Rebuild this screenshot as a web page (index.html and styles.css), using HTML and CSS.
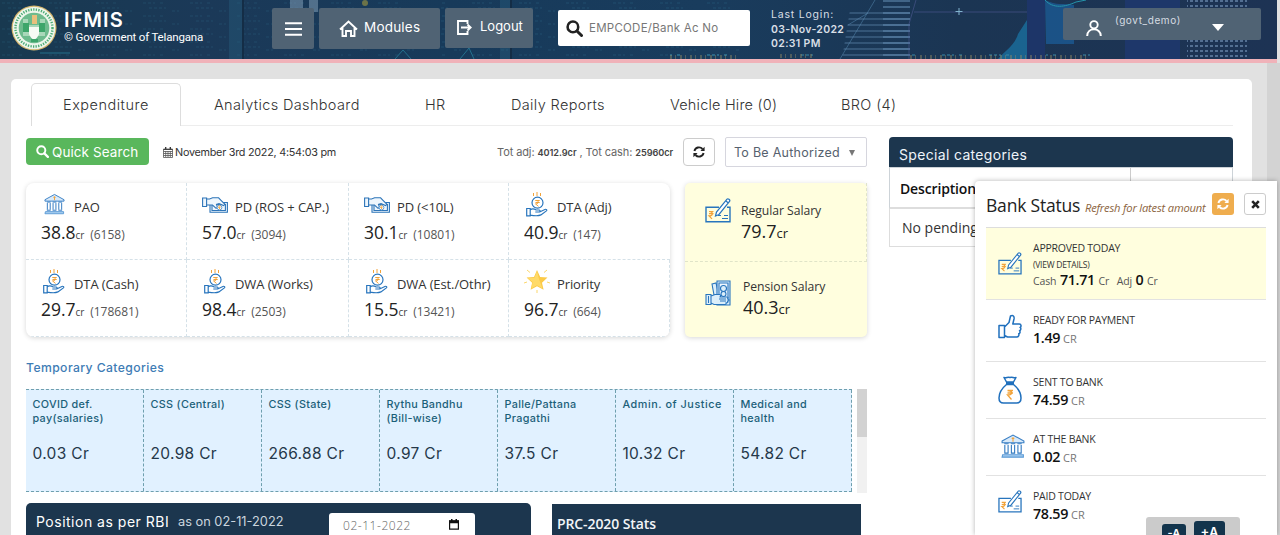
FILE: index.html
```html
<!DOCTYPE html>
<html lang="en">
<head>
<meta charset="utf-8">
<title>IFMIS Telangana</title>
<link rel="stylesheet" href="styles.css">
</head>
<body>
<svg class="defs" aria-hidden="true">
  <defs>
    <pattern id="dots" width="5" height="5" patternUnits="userSpaceOnUse"><rect width="3" height="2" fill="#7898bd"/></pattern>
    <pattern id="bars" width="30" height="6" patternUnits="userSpaceOnUse"><rect width="30" height="2" fill="#5b83a8"/></pattern>
    <pattern id="code" width="47" height="13" patternUnits="userSpaceOnUse"><path d="M2 3h12M19 3h3M8 8h17M31 11h7" stroke="#388aa8" stroke-dasharray="3 2"/></pattern>
  </defs>
  <symbol id="bank" viewBox="0 0 22 22"><path d="M1 6.500 11 1l10 5.500v1.500H1z" fill="#d8eafa" stroke="#3a7fc4"/><path d="M3 9h4M9 9h4M15 9h4M3.500 10v7M6.500 10v7M9.500 10v7M12.500 10v7M15.500 10v7M18.500 10v7M3 17.500h4M9 17.500h4M15 17.500h4" stroke="#2f78c0" fill="none"/><path d="M1.500 19h19v2.200H1z" fill="#a8cef0" stroke="#5c9bd6"/><path d="M11 3v4M9.800 4h2.400" stroke="#f2a33a"/></symbol>
  <symbol id="cash" viewBox="0 0 26 16"><g fill="#eef6fd" stroke="#2d74b8" stroke-width="1.100"><path d="M8 5.500h17.400v9.800H8z"/><path d="M10 7.500h13.400v6H10z" fill="none"/><path d="M.6 1h4v8.500h-4zM4.600 2h3l3-1.200h6l2.400 2.500 4 4-1.500 1.300-4.500-2-2.500.8 1 3-1.400 1-3.600-3.400H4.600z"/></g><circle cx="17.500" cy="10.500" r="2.400" fill="#fff" stroke="#5c9bd6"/><path d="M16.500 9h2m-2 1.300h2m-1.800 0 1.500 2" stroke="#f2a33a" fill="none"/></symbol>
  <symbol id="coin" viewBox="0 0 22 25"><path d="M7.500 1v3M11 0v4M14.500 1v3" stroke="#f2a33a"/><g fill="none" stroke="#2875bd" stroke-width="1.200"><circle cx="11.500" cy="10.700" r="5.500"/><path d="M.7 16.500h3.500v7.300H.7zM4.200 18c2-1.800 3.600-1.400 6 0h3c1.200.3 1.200 2 0 2H9.300h4.400l5.200-2.500c1.400-.7 2.500.5 1.500 1.400l-5.500 4c-2 1-5 1.300-10.700.2"/></g><path d="M9.500 8.500h4.200m-4.200 2h4.200M9.500 8.500c4 0 4 3.400 0 3.400l3 2.500" stroke="#f2a33a" fill="none"/></symbol>
  <symbol id="star" viewBox="0 0 26 26"><path d="m13 2 3.200 7 7.300.6-5.500 5.200 1.600 7-6.600-3.600-6.400 3.600 1.500-7L2.600 9.600 10 9z" fill="#fcca47"/><path d="m13 3 1.800 7.500 3.700 9.900-5.500-3.200-5.800 3.200L8.700 14 3.500 10.200l7-.5z" fill="#ffda68"/><path d="m3 2 3 2.500M23 2l-3 2.500M0 15l3-1M26 15l-3-1M13 22v3" stroke="#fbd76c"/></symbol>
  <symbol id="cheque" viewBox="0 0 26 25"><g fill="none" stroke="#2875bd" stroke-width="1.400"><path d="M14 9.200H1v14.500h24V9.200h-3"/><path d="M17 20.500h6M13 17.500h3M19 17.500h4" stroke-width="1"/><path d="m10.500 18 1-4L22 1.200c1-1 3.400.6 2.700 2L14 16.500zM21 3l2.300 2" fill="#fff" stroke-width="1.200"/></g><path d="M4 13.500h4.500M4 15.700h4.500M4 13.500c4.500 0 4.500 4.400 0 4.400l3 3" stroke="#f2a33a" stroke-width="1.200" fill="none"/></symbol>
  <symbol id="pension" viewBox="0 0 26 26"><g fill="#dbeefa" stroke="#2875bd" stroke-width="1.100"><path d="m7 4 4-1 3 12H9z"/><path d="M12 1h13v24H12z"/><path d="M14 3h9v15h-9z" fill="#f0f8ff"/><circle cx="18.500" cy="8.500" r="3"/><circle cx="18.500" cy="14" r="2.500"/><path d="M1 14.500h5v10H1zM6 16l4-1.500h4.500c1.500 0 1.500 2.500 0 2.500H22c1.400 0 1.400 2 0 2h1c1.300 0 1.300 2 0 2h-1c1.200 0 1.200 1.800 0 1.800h-1.500c1 0 1 1.700-.5 1.700H9l-3-1.500z"/></g><path d="M3.500 16v7M14 19h7m-6 2h6" stroke="#2875bd"/></symbol>
  <symbol id="thumb" viewBox="0 0 24 24"><path d="M1 11h5.500v12H1zM6.500 12.500 11 8l1.500-6.500c2.500-1.500 4 .5 3.500 3l-1.200 5h6.500c2.200 0 2.200 3 .7 3.400 1.400.8 1 3-.5 3.300 1 .9.600 2.800-.8 3 .6 1.400-.2 3.300-2 3.300H9.500l-3-1.500" fill="none" stroke="#2070bd" stroke-width="1.500" stroke-linejoin="round"/></symbol>
  <symbol id="bag" viewBox="0 0 24 28"><path d="M8.500 6 6 1.500c2 1 3.500-.8 6 0 2.500-.8 4 1 6 0L15.500 6zm0 2.500C3 13 1 18 1 22c0 3 1.500 5 4.500 5h13c3 0 4.500-2 4.500-5 0-4-2-9-7.500-13.500zM8 7.200h8" fill="none" stroke="#2070bd" stroke-width="1.500" stroke-linejoin="round"/><path d="M9.500 14.500h5.500M9.500 17H15m-5.500-2.500c5.500 0 5.500 4.500 0 4.500l4 4.500" stroke="#f2a33a" stroke-width="1.300" fill="none"/></symbol>
  <symbol id="refresh" viewBox="0 0 12 12"><path d="M1.400 5A4.700 4.700 0 0 1 9.500 3M10.600 7A4.700 4.700 0 0 1 2.500 9" fill="none" stroke="currentColor" stroke-width="1.900"/><path d="M11.600.8V5H7.400zM.4 11.200V7h4.200z" fill="currentColor"/></symbol>
  <symbol id="search" viewBox="0 0 16 16"><circle cx="6.500" cy="6.500" r="5" fill="none" stroke="currentColor" stroke-width="2.400"/><path d="m10.300 10.300 4.300 4.300" stroke="currentColor" stroke-width="2.800" stroke-linecap="round"/></symbol>
</svg>

<header class="topbar">
  <svg class="city" viewBox="0 0 1277 59" preserveAspectRatio="none" aria-hidden="true">
    <rect width="420" height="59" fill="url(#code)" opacity=".22"/>
    <rect x="440" width="300" height="59" fill="url(#code)" opacity=".25"/>
    <path d="M229 0h13v59h-13zM500 0h10v59h-10z" fill="#2c6385" opacity=".35"/>
    <path d="M243 0v59M511 0v59" stroke="#142d46" stroke-width="2"/>
    <path d="M290 0h13v8h-13zM309 0h9v12h-9z" fill="#8aa6bd" opacity=".5"/>
    <circle cx="365" cy="3" r="3" fill="#a39a3d" opacity=".6"/>
    <path d="M840 59 875 0M848 25l20-12" stroke="#4e7fa5" fill="none" opacity=".6"/>
    <path d="M850 10h60v49h-68z" fill="url(#bars)" opacity=".4"/>
    <path d="M883 0h27v59h-27z" fill="url(#bars)" opacity=".6"/>
    <path d="M909 59V24l7-24M914 12h120" stroke="#5760a0" fill="none" opacity=".5"/>
    <path d="M998 59c8-9 17-14 20-25l9-14v39z" fill="#1978aa" opacity=".7"/>
    <path d="M1027 0h18v59h-18z" fill="#1d3568"/>
    <path d="M1045 0c12 6 18 3 29 5v39h-28z" fill="#1b5a93" opacity=".8"/>
    <path d="M1045 0c8 9 20 7 31 2l10-2" fill="none" stroke="#2594ab"/>
    <path d="M1125 0h55v59h-55z" fill="#203b79" opacity=".6"/>
    <path d="M1187 0h60v59h-60z" fill="url(#dots)" opacity=".6"/>
    <path d="M912 51h118v8H912zM1045 53h45v6h-45zM670 51h65v8h-65zM780 51h35v8h-35z" fill="url(#code)"/>
    <path d="M910 57h180M670 57h70M780 56h35" stroke="#938b65" stroke-width="4" stroke-dasharray="2 3 1 4" opacity=".45"/>
    <path d="M959 8v7M955.500 11.500h7" stroke="#81b3ce"/>
    <path d="M395 59l8-9 8 9M460 59l9-11 5 11M40 53h30" stroke="#2988a2" fill="none" opacity=".7"/>
  </svg>
  <svg class="seal" viewBox="0 0 46 46" role="img" aria-label="Government of Telangana seal">
    <circle cx="23" cy="23" r="22.500" fill="#d4b56d"/><circle cx="23" cy="23" r="21.300" fill="#edf6eb"/>
    <circle cx="23" cy="23" r="18.500" fill="none" stroke="#4bab75" stroke-width="2.400" stroke-dasharray="1.300 1.300"/>
    <circle cx="23" cy="23" r="15.300" fill="#6dbb8d"/>
    <path d="M12 14v17h22V14h-5v6H17v-6z" fill="#a9d8b9"/><path d="M12 18h6v9h-6zM28 18h6v9h-6z" fill="#3da56a"/>
    <path d="M18 22h10v7c-1 3-3 5-5 6-2-1-4-3-5-6z" fill="#f7fbf4"/><path d="M21 10h5v9h-5z" fill="#e8c07c"/><path d="M20 34h7v3h-7z" fill="#3da56a"/>
  </svg>
  <div class="brand"><strong>IFMIS</strong><span>© Government of Telangana</span></div>
  <div class="btn menu"><svg width="17" height="14" viewBox="0 0 17 14"><path d="M0 1.200h17M0 7h17M0 12.800h17" stroke="#fff" stroke-width="2"/></svg></div>
  <div class="btn modules"><svg width="19" height="17" viewBox="0 0 19 17"><path d="M1 9.500 9.500 1.500 18 9.500M3.500 8v8H7v-5h5v5h3.500V8" fill="none" stroke="#fff" stroke-width="1.900"/></svg><span>Modules</span></div>
  <div class="btn logout"><svg width="15" height="15" viewBox="0 0 15 15"><path d="M10.500 4V1H1v13h9.500v-3M4 7.500h9.500M10.500 4.500l3.200 3-3.200 3" fill="none" stroke="#fff" stroke-width="1.900"/></svg><span>Logout</span></div>
  <div class="find"><svg width="17" height="17"><use href="#search"/></svg><span>EMPCODE/Bank Ac No</span></div>
  <div class="login"><span>Last Login:</span><b>03-Nov-2022</b><b>02:31 PM</b></div>
  <div class="btn user"><svg width="16" height="16" viewBox="0 0 16 16"><circle cx="8" cy="4.800" r="3.700" fill="none" stroke="#fff" stroke-width="1.900"/><path d="M1.200 16c0-9 13.600-9 13.600 0" fill="none" stroke="#fff" stroke-width="2"/></svg><span>(govt_demo)</span><i class="caret"></i></div>
</header>

<main class="sheet">
  <nav class="tabs"><a class="on">Expenditure</a><a>Analytics Dashboard</a><a>HR</a><a>Daily Reports</a><a>Vehicle Hire (0)</a><a>BRO (4)</a></nav>
  <div class="columns">
    <div class="left">
      <div class="tools">
        <div class="quick"><svg width="13" height="13"><use href="#search"/></svg><span>Quick Search</span></div>
        <div class="clock"><svg width="10" height="11" viewBox="0 0 10 11"><path d="M.5 2h9v8.500h-9zM.5 4.500h9M.5 6.500h9M.5 8.500h9M2.700 4v6M5 4v6M7.300 4v6" fill="none" stroke="#555" stroke-width=".8"/><path d="M2.700 0v3M7.300 0v3" stroke="#333" stroke-width="1.300"/><path d="M.5 2.500h9" stroke="#444"/></svg><span>November 3rd 2022, 4:54:03 pm</span></div>
        <div class="totals"><span>Tot adj:</span><b>4012.9cr</b><span>, Tot cash:</span><b>25960cr</b></div>
        <div class="reload"><svg width="12" height="12"><use href="#refresh"/></svg></div>
        <div class="select"><span>To Be Authorized</span><i></i></div>
      </div>
      <div class="cards">
        <div class="stats">
          <div class="stat"><div class="name"><svg class="i-bank"><use href="#bank"/></svg>PAO</div><div class="sum">38.8<small>cr</small><em>(6158)</em></div></div>
          <div class="stat"><div class="name"><svg class="i-cash"><use href="#cash"/></svg>PD (ROS + CAP.)</div><div class="sum">57.0<small>cr</small><em>(3094)</em></div></div>
          <div class="stat"><div class="name"><svg class="i-cash"><use href="#cash"/></svg>PD (&lt;10L)</div><div class="sum">30.1<small>cr</small><em>(10801)</em></div></div>
          <div class="stat"><div class="name"><svg class="i-coin"><use href="#coin"/></svg>DTA (Adj)</div><div class="sum">40.9<small>cr</small><em>(147)</em></div></div>
          <div class="stat"><div class="name"><svg class="i-coin"><use href="#coin"/></svg>DTA (Cash)</div><div class="sum">29.7<small>cr</small><em>(178681)</em></div></div>
          <div class="stat"><div class="name"><svg class="i-coin"><use href="#coin"/></svg>DWA (Works)</div><div class="sum">98.4<small>cr</small><em>(2503)</em></div></div>
          <div class="stat"><div class="name"><svg class="i-coin"><use href="#coin"/></svg>DWA (Est./Othr)</div><div class="sum">15.5<small>cr</small><em>(13421)</em></div></div>
          <div class="stat"><div class="name"><svg class="i-star"><use href="#star"/></svg>Priority</div><div class="sum">96.7<small>cr</small><em>(664)</em></div></div>
        </div>
        <div class="salary">
          <div class="pay"><svg width="26" height="25"><use href="#cheque"/></svg><div><span>Regular Salary</span><strong>79.7<small>cr</small></strong></div></div>
          <div class="pay pension"><svg width="26" height="26"><use href="#pension"/></svg><div><span>Pension Salary</span><strong>40.3<small>cr</small></strong></div></div>
        </div>
      </div>
      <h2>Temporary Categories</h2>
      <div class="temp">
        <div class="cats">
          <div><span>COVID def.<br>pay(salaries)</span><b>0.03 Cr</b></div>
          <div><span>CSS (Central)</span><b>20.98 Cr</b></div>
          <div><span>CSS (State)</span><b>266.88 Cr</b></div>
          <div><span>Rythu Bandhu<br>(Bill-wise)</span><b>0.97 Cr</b></div>
          <div><span>Palle/Pattana<br>Pragathi</span><b>37.5 Cr</b></div>
          <div><span>Admin. of Justice</span><b>10.32 Cr</b></div>
          <div><span>Medical and<br>health</span><b>54.82 Cr</b></div>
        </div>
        <div class="scroll"><i></i></div>
      </div>
      <div class="panels">
        <div class="rbi"><span class="title">Position as per RBI</span><span class="asof">as on 02-11-2022</span><div class="date"><span>02-11-2022</span><svg width="10" height="11" viewBox="0 0 10 11"><path d="M.6 2h8.800v8.200H.6z" fill="none" stroke="#111" stroke-width="1.200"/><path d="M0 1.300h10v2.900H0zM2 0h1.500v2H2zM6.500 0H8v2H6.500z" fill="#111"/></svg></div></div>
        <div class="prc">PRC-2020 Stats</div>
      </div>
    </div>
    <section class="special">
      <h3>Special categories</h3>
      <div class="thead"><b>Description</b><i></i></div>
      <div class="empty">No pending bills</div>
    </section>
  </div>
</main>
<div class="gutter"></div>

<aside class="status">
  <div class="status-head"><h3>Bank Status</h3><em>Refresh for latest amount</em><span class="again"><svg width="12" height="12"><use href="#refresh"/></svg></span><span class="close"><svg width="9" height="9" viewBox="0 0 9 9"><path d="m1.200 1.200 6.600 6.600m0-6.600L1.200 7.800" stroke="#222" stroke-width="2.600"/></svg></span></div>
  <div class="line approved"><svg width="24" height="23"><use href="#cheque"/></svg><div><span>APPROVED TODAY</span><span class="view">(VIEW DETAILS)</span><p class="split">Cash <b>71.71</b> Cr <i>Adj</i> <b>0</b> Cr</p></div></div>
  <div class="line ready"><svg width="24" height="25"><use href="#thumb"/></svg><div><span>READY FOR PAYMENT</span><p><b>1.49</b> CR</p></div></div>
  <div class="line sent"><svg width="24" height="28"><use href="#bag"/></svg><div><span>SENT TO BANK</span><p><b>74.59</b> CR</p></div></div>
  <div class="line at"><svg width="24" height="24"><use href="#bank"/></svg><div><span>AT THE BANK</span><p><b>0.02</b> CR</p></div></div>
  <div class="line paid"><svg width="24" height="23"><use href="#cheque"/></svg><div><span>PAID TODAY</span><p><b>78.59</b> CR</p></div></div>
</aside>
<div class="zoomer"><span>-A</span><span class="big">+A</span></div>
</body>
</html>
```
FILE: styles.css
```css
* { box-sizing: border-box; }
body { margin: 0; height: 535px; position: relative; overflow: hidden; background: #e1e1e1; font-family: "Open Sans", "Noto Sans", sans-serif; color: #333; }
svg { display: block; flex: none; }
.defs { position: absolute; width: 0; height: 0; }
h2, h3, p { margin: 0; font-weight: 400; }
.topbar, .tabs, .tools, .temp, .panels .title, .asof, .special h3, h2 { font-family: Inter, sans-serif; }

.topbar { position: relative; display: flex; align-items: flex-start; width: 1277px; height: 63px; border-bottom: 4px solid #f0b2b9; background: linear-gradient(90deg, #183950, #1b3958 16%, #173a5a 35%, #193c5d 55%, #1b3553 75%, #1d3354); color: #fff; overflow: hidden; }
.city { position: absolute; inset: 0; width: 1277px; height: 59px; filter: blur(.7px); }
.topbar > :not(.city) { position: relative; flex: none; }
.seal { width: 46px; height: 46px; margin: 5px 0 0 11px; }
.brand { display: flex; flex-direction: column; width: 215px; padding: 8px 0 0 7px; }
.brand strong { font-size: 20px; line-height: 24px; font-weight: 600; letter-spacing: 1.100px; }
.brand span { font: 11.500px/13px Roboto, sans-serif; margin-top: -1px; letter-spacing: -.18px; white-space: nowrap; }
.btn { display: flex; background: #506374; border-radius: 2px; height: 41px; margin-top: 8px; }
.menu { width: 42px; justify-content: center; padding-top: 14px; }
.modules { width: 121px; margin-left: 5px; padding: 12px 0 0 20px; gap: 6px; }
.modules span { font-size: 13.500px; line-height: 14px; letter-spacing: .2px; }
.logout { width: 88px; height: 40px; margin-left: 5px; padding: 12px 0 0 12px; gap: 8px; }
.logout span { font-size: 13px; line-height: 13px; }
.find { display: flex; align-items: center; width: 192px; height: 36px; margin: 10px 0 0 25px; padding-left: 8px; gap: 6px; background: #fff; border-radius: 2px; color: #222; }
.find span { font-size: 11.500px; color: #777; letter-spacing: .25px; }
.login { display: flex; flex-direction: column; width: 292px; margin-left: 21px; padding-top: 8px; font-size: 10.500px; line-height: 14.500px; color: #d8dfe6; letter-spacing: .8px; }
.login b { font-weight: 600; letter-spacing: .33px; }
.user { width: 198px; height: 32px; padding: 12px 0 0 23px; }
.user span { font-size: 10px; line-height: 12px; margin: -6px 0 0 13px; color: #d6dce2; letter-spacing: .6px; }
.caret { width: 0; height: 0; margin: 4px 0 0 31px; border: 6px solid transparent; border-top: 7px solid #fff; border-bottom: 0; }

.sheet { width: 1241px; height: 470px; margin: 16px 0 0 11px; padding: 4px 19px 0 15px; background: #fff; border-radius: 5px 5px 0 0; }
.tabs { display: grid; grid-template-columns: 151px 211px 86px 159px 171px 120px; height: 43px; margin-left: 5px; border-bottom: 1px solid #ededed; font-size: 14.500px; font-weight: 300; letter-spacing: .36px; }
.tabs a { padding: 14px 0 0 32px; line-height: 16px; white-space: nowrap; }
.tabs a:nth-child(5) { letter-spacing: .2px; }
.tabs .on { border: 1px solid #ddd; border-bottom: 0; border-radius: 5px 5px 0 0; height: 43px; width: 150px; padding: 13px 0 0 31px; background: #fff; letter-spacing: .5px; }
.columns { display: flex; gap: 22px; padding-top: 11px; }
.left { width: 841px; }
.tools { display: flex; height: 46px; align-items: flex-start; white-space: nowrap; }
.quick { display: flex; align-items: center; gap: 3px; width: 123px; height: 27px; margin-top: 1px; padding-left: 10px; border-radius: 4px; background: #59b75c; color: #fff; font-size: 13.500px; letter-spacing: .08px; }
.clock { display: flex; align-items: center; height: 30px; width: 334px; padding-left: 14px; gap: 2px; font-size: 10.800px; letter-spacing: -.25px; }
.totals { display: flex; align-items: baseline; width: 200px; line-height: 31px; font-size: 11px; color: #666; padding-left: 14px; gap: 3px; letter-spacing: -.1px; }
.totals b { font-size: 9.200px; font-weight: 600; color: #444; letter-spacing: -.06px; }
.reload { display: grid; place-items: center; width: 32px; height: 28px; margin-top: 1px; border: 1px solid #ccc; border-radius: 4px; color: #222; }
.select { display: flex; align-items: center; width: 142px; height: 30px; margin-left: 10px; padding-left: 8px; border: 1px solid #d6d6de; border-radius: 2px; font-size: 12.500px; color: #56616e; letter-spacing: .27px; }
.select i { border: 3.500px solid transparent; border-top: 6px solid #777; border-bottom: 0; margin: 2px 0 0 9px; }
.cards { display: flex; gap: 15px; height: 154px; }
.stats { display: grid; grid-template-columns: 161px 162px 160px 161px; grid-template-rows: 77px 77px; width: 644px; flex: none; border-radius: 8px; box-shadow: 0 1px 5px rgba(0,0,0,.16); overflow: hidden; }
.stat { padding: 8px 0 0 15px; border-right: 1px dashed #d5e1e8; border-bottom: 1px dashed #d5e1e8; }
.stat:nth-child(4) { border-right: 0; }
.name { display: flex; height: 30px; align-items: flex-end; font-size: 13px; line-height: 28px; white-space: nowrap; letter-spacing: -.1px; }
.name svg { margin: 0 9px 6px 3px; }
.i-bank { width: 21px; height: 22px; }
.i-cash { width: 26px; height: 16px; }
.name .i-cash { margin: 0 7px 8px 0; }
.i-coin { width: 22px; height: 25px; }
.name .i-coin { margin: 0 9px 4px 2px; }
.i-star { width: 26px; height: 26px; }
.name .i-star { margin: 0 7px 4px 0; }
.sum { line-height: 22px; font-size: 17.500px; color: #222; letter-spacing: -.05px; }
.sum small { font-size: 10px; color: #444; }
.sum em { font-size: 12px; font-style: normal; color: #555; margin-left: 6px; letter-spacing: 0; }
.salary { width: 182px; background: #fffede; border-radius: 5px; box-shadow: 0 1px 5px rgba(0,0,0,.16); }
.pay { display: flex; height: 79px; padding: 15px 0 0 20px; gap: 10px; border-bottom: 1px dashed #e0e4c8; border-right: 1px dashed #e0e4c8; }
.pension { border: 0; padding-top: 18px; gap: 12px; height: 75px; }
.pay div { display: flex; flex-direction: column; padding-top: 5px; }
.pension div { padding-top: 0; margin-top: -1px; }
.pay span { font-size: 12.200px; line-height: 16px; letter-spacing: -.05px; }
.pay strong { font-size: 18px; line-height: 25px; font-weight: 400; color: #222; }
.pay small { font-size: 13px; }
h2 { font-size: 12.200px; line-height: 16px; font-weight: 500; color: #3e7cb5; margin: 23px 0 13px; letter-spacing: .4px; }
.temp { display: flex; gap: 5px; height: 104px; }
.cats { display: grid; grid-template-columns: 118px 118px 118px 118px 118px 118px 118px; width: 826px; height: 103px; border-top: 1px dashed #6e9fae; border-bottom: 1px dashed #6e9fae; background: #e1f1ff; }
.cats > div { border-right: 1px dashed #6e9fae; padding: 8px 0 0 6.500px; display: flex; flex-direction: column; }
.cats span { height: 37px; font-size: 10.800px; line-height: 13.500px; font-weight: 500; color: #1b6079; letter-spacing: .33px; white-space: nowrap; }
.cats > div:nth-child(6) span { letter-spacing: .55px; }
.cats b { font-size: 15.500px; line-height: 38px; font-weight: 400; color: #25384a; letter-spacing: .32px; }
.scroll { width: 10px; background: #f1f1f1; }
.scroll i { display: block; height: 48px; background: #d2d2d2; }
.panels { display: flex; gap: 21px; margin-top: 10px; }
.rbi { display: flex; width: 505px; height: 40px; padding: 10px 0 0 10px; border-radius: 5px 5px 0 0; background: #1c364e; color: #fff; }
.rbi .title { width: 142px; line-height: 17px; font-size: 14px; white-space: nowrap; letter-spacing: .5px; }
.rbi .asof { width: 151px; line-height: 17px; font-size: 12.800px; color: #cad5df; }
.date { display: flex; justify-content: space-between; width: 146px; height: 30px; padding: 6px 16px 0 14px; background: #fff; border-radius: 3px 3px 0 0; font-size: 12px; line-height: 14px; font-weight: 300; letter-spacing: .55px; color: #666; }
.prc { width: 309px; height: 40px; margin-top: 1px; padding: 10px 0 0 5px; background: #1c364e; color: #f2f5f8; font-weight: 600; font-size: 14px; line-height: 20px; letter-spacing: -.1px; }

.special { width: 344px; }
.special h3 { height: 30px; padding: 9px 0 0 10px; border-radius: 4px 4px 0 0; background: #1c364e; color: #eef4fa; font-size: 14px; line-height: 18px; letter-spacing: .33px; }
.thead { display: flex; height: 42px; border: 1px solid #cdd3d8; border-bottom: 2px solid #ddd; font-size: 14px; line-height: 41px; color: #111; }
.thead b { font-weight: 600; padding-left: 10px; width: 241px; border-right: 1px solid #ccc; letter-spacing: -.15px; }
.empty { height: 38px; border: 1px solid #ddd; border-top: 0; padding-left: 12px; font-size: 14px; line-height: 37px; }
.gutter { position: absolute; right: 0; top: 63px; width: 13px; height: 472px; background: #d3d3d3; }

.status { position: absolute; left: 975px; top: 181px; width: 302px; height: 354px; padding: 0 11px; background: #fff; border-top-left-radius: 4px; box-shadow: 0 0 5px rgba(0,0,0,.3); }
.status-head { display: flex; height: 47px; padding-top: 12px; white-space: nowrap; border-bottom: 1px solid #ddd; }
.status h3 { width: 99px; font-size: 17.500px; line-height: 25px; letter-spacing: -.2px; color: #222; }
.status-head em { width: 127px; font-size: 11.200px; line-height: 30px; color: #8b6440; letter-spacing: -.2px; }
.again, .close { display: grid; place-items: center; width: 22px; height: 22px; border-radius: 3px; background: #efad4e; color: #fff; }
.close { margin-left: 10px; border: 1px solid #ccc; background: #fff; }
.line { display: flex; padding-left: 12px; gap: 11px; height: 57px; border-bottom: 1px solid #e2e2e2; }
.line svg { margin-top: 14px; }
.line div { padding-top: 13px; }
.line span { display: block; font-size: 10.500px; line-height: 15px; letter-spacing: -.23px; white-space: nowrap; }
.line p { font-size: 11px; line-height: 20px; color: #777; }
.line b { font-size: 14.300px; font-weight: 600; color: #111; letter-spacing: -.3px; }
.approved { height: 72px; background: #fffede; }
.approved svg { margin-top: 24px; }
.approved .view { font-size: 8.500px; line-height: 17px; }
.approved .split { line-height: 13px; font-size: 10.500px; word-spacing: 1px; color: #555; letter-spacing: -.15px; }
.split i { font-style: normal; margin-left: 4px; }
.ready { height: 62px; }
.paid { border: 0; }
.at svg { margin: 15px -3px 0 3px; }
.zoomer { position: absolute; left: 1146px; top: 517px; width: 94px; height: 18px; display: flex; gap: 8px; padding: 4px 0 0 16px; background: #cbcbcb; border-radius: 3px 3px 0 0; }
.zoomer span { width: 24px; height: 24px; margin-top: 3px; background: #12344c; border-radius: 3px; color: #fff; font: 600 11px/18px Inter, sans-serif; text-align: center; }
.zoomer .big { width: 31px; margin-top: 0; font-size: 13px; line-height: 22px; }
```
